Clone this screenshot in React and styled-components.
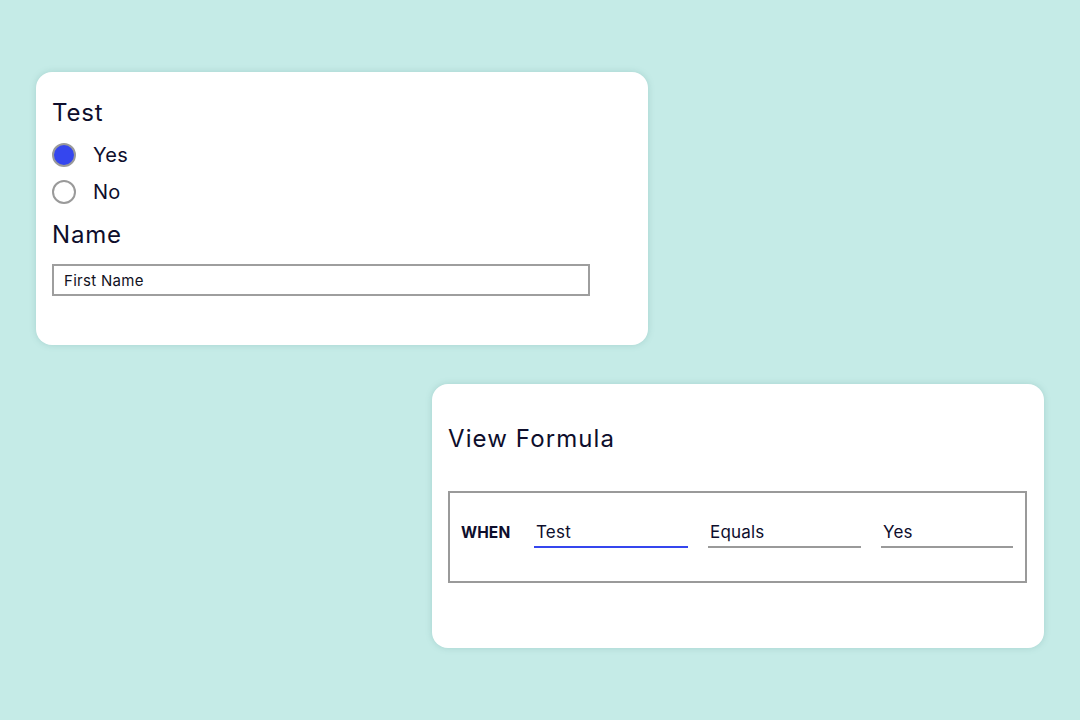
import React from "react";
import styled, { createGlobalStyle } from "styled-components";

const Global = createGlobalStyle`
  html, body { margin: 0; padding: 0; }
  body {
    background: #c5ebe7;
    font-family: Inter, "Noto Sans", sans-serif;
    color: #0e0e2c;
    width: 1080px;
    height: 720px;
    overflow: hidden;
  }
`;

const Page = styled.div`
  width: 1080px;
  height: 720px;
  box-sizing: border-box;
  padding: 72px 36px 0 36px;
  display: flex;
  flex-direction: column;
  gap: 39px;
`;

const Card = styled.div`
  box-sizing: border-box;
  width: 612px;
  height: ${(p) => p.$h}px;
  background: #ffffff;
  border-radius: 16px;
  box-shadow: 0 0 6px rgba(80, 140, 135, 0.25);
  align-self: ${(p) => (p.$right ? "flex-end" : "flex-start")};
  padding: ${(p) => p.$pad};
  display: flex;
  flex-direction: column;
  align-items: flex-start;
`;

const Heading = styled.div`
  font-size: 24px;
  line-height: 28px;
  font-weight: 400;
  color: #0e0e2c;
  letter-spacing: ${(p) => (p.$wide ? "1.1px" : "0.8px")};
`;

const RadioGroup = styled.div`
  display: flex;
  flex-direction: column;
  gap: 13px;
  margin: 16px 0 17px;
`;

const RadioRow = styled.label`
  display: flex;
  align-items: center;
  gap: 17px;
  height: 24px;
  font-size: 20px;
  letter-spacing: 0.3px;
`;

const RadioDot = styled.span`
  box-sizing: border-box;
  width: 24px;
  height: 24px;
  border-radius: 50%;
  border: 2px solid #9a9a9a;
  background: ${(p) => (p.$checked ? "#3546ee" : "#ffffff")};
`;

const TextInput = styled.div`
  box-sizing: border-box;
  margin-top: 15px;
  width: 538px;
  height: 32px;
  border: 2px solid #9e9e9e;
  padding: 0 10px;
  display: flex;
  align-items: center;
  font-size: 15px;
  letter-spacing: 0.3px;
  color: #111122;
`;

const FormulaBox = styled.div`
  box-sizing: border-box;
  margin-top: 38px;
  width: 579px;
  height: 92px;
  border: 2px solid #9a9a9a;
  padding: 27px 12px 0 11px;
  display: flex;
  align-items: baseline;
`;

const When = styled.span`
  font-size: 15.5px;
  font-weight: 700;
  width: 73px;
  letter-spacing: 0.1px;
`;

const Field = styled.div`
  box-sizing: border-box;
  width: ${(p) => p.$w}px;
  margin-right: ${(p) => p.$mr}px;
  padding: 0 2px 2px;
  font-size: 17px;
  line-height: 24px;
  letter-spacing: 0.2px;
  border-bottom: 2px solid ${(p) => (p.$active ? "#3546ee" : "#9a9a9a")};
`;

export default function App() {
  return (
    <>
      <Global />
      <Page>
        <Card $h={273} $pad="27px 16px">
          <Heading>Test</Heading>
          <RadioGroup>
            <RadioRow>
              <RadioDot $checked />
              Yes
            </RadioRow>
            <RadioRow>
              <RadioDot />
              No
            </RadioRow>
          </RadioGroup>
          <Heading>Name</Heading>
          <TextInput>First Name</TextInput>
        </Card>
        <Card $right $h={264} $pad="41px 16px">
          <Heading $wide>View Formula</Heading>
          <FormulaBox>
            <When>WHEN</When>
            <Field $w={154} $mr={20} $active>
              Test
            </Field>
            <Field $w={153} $mr={20}>
              Equals
            </Field>
            <Field $w={132} $mr={0}>
              Yes
            </Field>
          </FormulaBox>
        </Card>
      </Page>
    </>
  );
}
